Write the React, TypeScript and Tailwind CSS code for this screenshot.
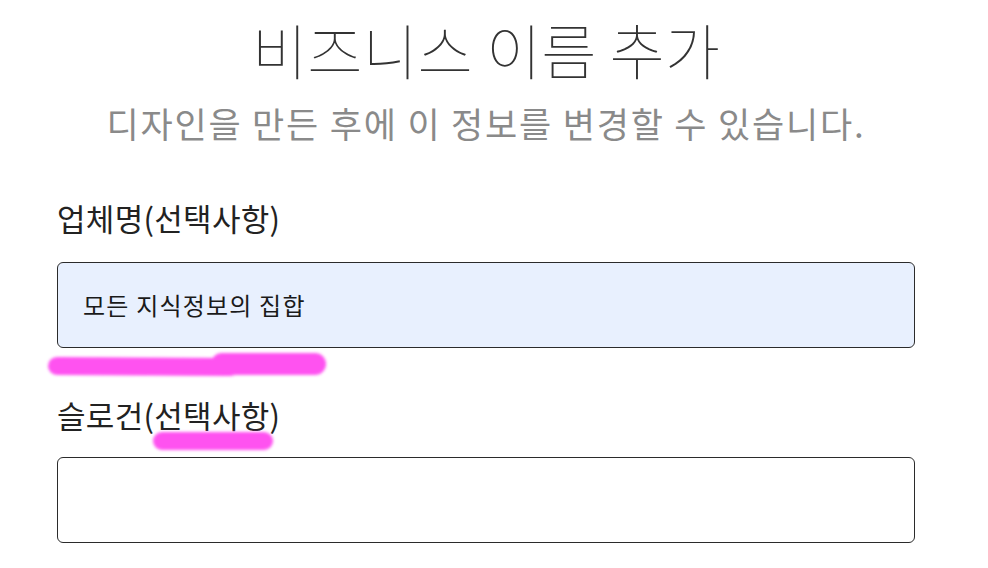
import React from "react";

const font = { fontFamily: '"Noto Sans CJK KR", "Noto Sans", sans-serif' };

export default function App() {
  return (
    <div className="relative w-[988px] h-[568px] bg-white overflow-hidden" style={font}>
      <div className="flex flex-col items-center pt-[11px] w-[972px]">
        <h1 className="text-[60px] leading-[76px] font-thin text-[#333333] tracking-[0px]">
          비즈니스 이름 추가
        </h1>
        <p className="mt-[14px] text-[35px] leading-[44px] font-normal text-[#8a8a8a] tracking-[1.8px]">
          디자인을 만든 후에 이 정보를 변경할 수 있습니다.
        </p>
      </div>
      <div className="flex flex-col px-[57px] w-[972px] mt-[53px]">
        <label className="text-[31px] leading-[40px] text-[#222222] tracking-[0.3px]">업체명(선택사항)</label>
        <div className="mt-[24px] h-[86px] rounded-[6px] border border-[#2b2b2b] bg-[#e8f0fe] flex items-center px-[25px]">
          <span className="text-[24px] text-[#1a1a1a] tracking-[1.2px]">모든 지식정보의 집합</span>
        </div>
        <label className="mt-[47px] text-[31px] leading-[40px] text-[#222222] tracking-[0.3px]">슬로건(선택사항)</label>
        <div className="mt-[22px] h-[86px] rounded-[6px] border border-[#2b2b2b] bg-white" />
      </div>
      <svg className="absolute left-0 top-0 pointer-events-none" width="988" height="568">
        <defs>
          <filter id="b" x="-10%" y="-50%" width="120%" height="200%">
            <feGaussianBlur stdDeviation="1.6" />
          </filter>
        </defs>
        <g filter="url(#b)" stroke="#ff48f0" strokeLinecap="round" fill="none" opacity="0.95">
          <path d="M57 366 L230 367" strokeWidth="18" />
          <path d="M222 364 L315 364" strokeWidth="22" />
          <path d="M162 441 L264 441" strokeWidth="18" />
        </g>
      </svg>
    </div>
  );
}
